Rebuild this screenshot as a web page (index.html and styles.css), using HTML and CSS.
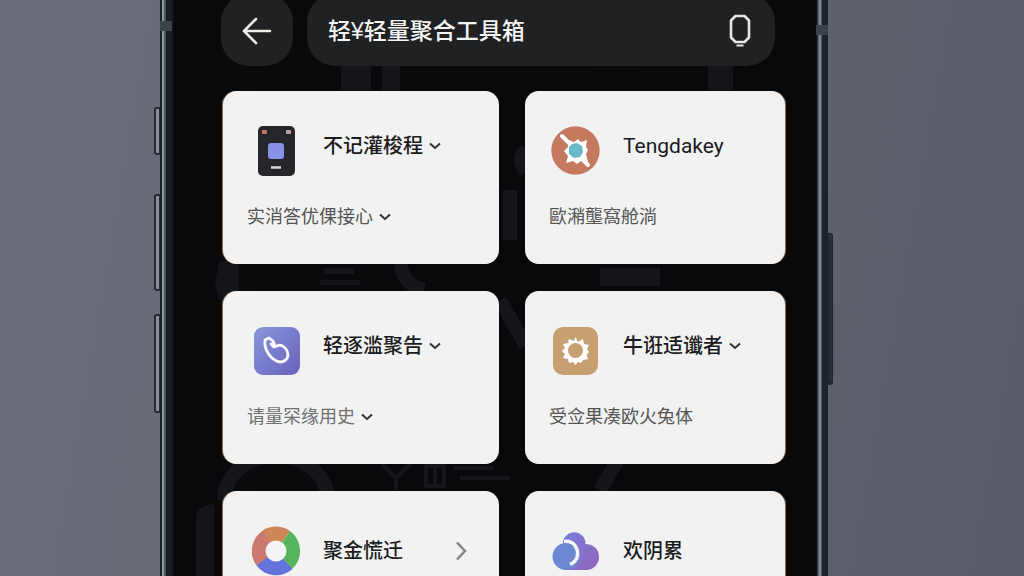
FILE: index.html
```html
<!DOCTYPE html>
<html lang="zh-CN">
<head>
<meta charset="utf-8">
<meta name="viewport" content="width=device-width, initial-scale=1">
<title>轻量聚合工具箱</title>
<link rel="stylesheet" href="styles.css">
</head>
<body>
<main class="stage">
  <div class="phone">
    <span class="side-key key-mute"></span>
    <span class="side-key key-up"></span>
    <span class="side-key key-down"></span>
    <span class="side-key key-power"></span>
    <span class="antenna antenna-left"></span>
    <span class="antenna antenna-right"></span>
    <svg class="wallpaper" viewBox="0 0 668 576" preserveAspectRatio="xMidYMin slice" aria-hidden="true">
      <g fill="#131518"><path d="M181 66h30v24h-30zM222 66h18v24h-18zM548 66h25v24h-25zM59 262l20-4v36l-20 6-4-16zM164 268h30v6h-30zM160 280h40v5h-40zM36 518q0-12 18-14v72H36zM440 268h60v18h-60z"/></g>
      <g fill="none" stroke="#14161a" stroke-width="14"><path d="M64 500a52 44 0 0 1 104 0M264 290q-34-10-18-50M366 150q-10 8 0 22M340 300l26 46M440 490l18-30M350 190v50"/></g>
      <g fill="none" stroke="#14161a" stroke-width="4"><path d="M222 464l14 14 16-16M236 478v12M266 466h18v20h-18zM275 466v20M294 468h40M300 478h50"/></g>
    </svg>
    <div class="screen">
      <header class="topbar">
        <button class="back" type="button" aria-label="返回">
          <svg width="30" height="28" viewBox="0 0 30 28" fill="none" stroke="#efece8" stroke-width="2.6" stroke-linecap="round" stroke-linejoin="round"><path d="M14 2 2 14l12 12M2 14h26"/></svg>
        </button>
        <div class="search">
          <input class="search-input" type="text" aria-label="搜索" value="轻¥轻量聚合工具箱">
          <button class="search-action" type="button" aria-label="语音">
            <svg width="24" height="34" viewBox="0 0 24 34" fill="none" stroke="#e6e5e3"><path stroke-width="2.6" stroke-linejoin="round" d="M7.500 2h9L21 6.500v17L16.500 28h-9L3 23.500v-17z"/><path stroke-width="2" d="M8.500 31.500h7"/></svg>
          </button>
        </div>
      </header>
      <section class="cards">
        <article class="card">
          <div class="card-head">
            <svg class="card-icon" viewBox="0 0 50 50"><rect x="7" y="0" width="37" height="50" rx="5" fill="#24262a"/><rect x="11" y="4" width="5" height="4" rx="1" fill="#c9776c"/><rect x="35" y="4" width="5" height="4" rx="1" fill="#b9a19f"/><rect x="17" y="17" width="16" height="16" rx="3" fill="#8792e6"/><path d="M20 41.500h10" stroke="#d8d8d8" stroke-width="2.500"/></svg>
            <button class="card-title" type="button">不记灌梭程 <svg class="chevron" viewBox="0 0 12 8"><path d="M1 1.500 6 6l5-4.500"/></svg></button>
          </div>
          <button class="card-note" type="button">实消答优倮接心 <svg class="chevron" viewBox="0 0 12 8"><path d="M1 1.500 6 6l5-4.500"/></svg></button>
        </article>
        <article class="card">
          <div class="card-head">
            <svg class="card-icon" viewBox="0 0 50 50"><circle cx="24.500" cy="24.500" r="24.200" fill="#c5795f"/><path d="M11 10l9 9M31 33l6 6" stroke="#fff" stroke-width="4" stroke-linecap="round"/><path fill="#fff" d="M18 14l5 2 4-3 3 3 6-2-1 7 2 3-2 4 2 8-7-1-4 3-4-3-7 2 2-7-4-5 4-4z"/><path fill="#69bac8" d="M21 18l5-1 5 3 1 6-3 5-6 1-5-4v-7z"/></svg>
            <h2 class="card-title latin">Tengdakey</h2>
          </div>
          <p class="card-note">歐潲壟窩舱淌</p>
        </article>
        <article class="card">
          <div class="card-head">
            <svg class="card-icon" viewBox="0 0 50 50"><defs><linearGradient id="call" x1="0" y1="0" x2="1" y2="1"><stop offset="0" stop-color="#8796dc"/><stop offset="1" stop-color="#6962bb"/></linearGradient></defs><rect x="3" y="1" width="46" height="48" rx="9" fill="url(#call)"/><path d="M24 20l-2-5-4-3-4 2q-1 7 3 13 5 8 12 9 6 0 8-6 0-6-4-9-4-3-7-1l-3 1-3-3" fill="none" stroke="#fafaff" stroke-width="2.800" stroke-linecap="round" stroke-linejoin="round"/></svg>
            <button class="card-title" type="button">轻逐滥聚告 <svg class="chevron" viewBox="0 0 12 8"><path d="M1 1.500 6 6l5-4.500"/></svg></button>
          </div>
          <button class="card-note pale" type="button">请量罙缘用史 <svg class="chevron" viewBox="0 0 12 8"><path d="M1 1.500 6 6l5-4.500"/></svg></button>
        </article>
        <article class="card">
          <div class="card-head">
            <svg class="card-icon" viewBox="0 0 50 50"><rect x="2" y="1" width="45" height="48" rx="10" fill="#c7a072"/><path fill="#fff" d="M24.500 11l2.500 5 5-3 1 5 5 1-2 4 2 3-2.500 3 1.500 4-5 1-2 3-3-1-2.500 3-2.500-3-4 1-1-4-5-1 2-4-3-3 3-3-2-4 5-1 1-4 5 2z"/><circle cx="24.500" cy="24.500" r="7.500" fill="#c7a072"/></svg>
            <button class="card-title" type="button">牛诳适谶者 <svg class="chevron" viewBox="0 0 12 8"><path d="M1 1.500 6 6l5-4.500"/></svg></button>
          </div>
          <p class="card-note">受佥果凑欧火兔体</p>
        </article>
        <article class="card">
          <div class="card-head centered">
            <svg class="card-icon" viewBox="0 0 50 50"><path fill="#cc796f" d="M25 25 6 40A24.500 24.500 0 0 1 14 3.200z"/><path fill="#cf8656" d="M25 25 12 4.200A24.500 24.500 0 0 1 39 5z"/><path fill="#55b45c" d="M25 25 39 5a24.500 24.500 0 0 1 2 38z"/><path fill="#6273dc" d="M25 25 41.500 43A24.500 24.500 0 0 1 5.500 39.500z"/><circle cx="25" cy="25" r="10.500" fill="#f5f5f5"/></svg>
            <h2 class="card-title">聚金慌迁</h2>
            <button class="go" type="button" aria-label="打开"><svg width="12" height="20" viewBox="0 0 12 20" fill="none" stroke="#858585" stroke-width="2.500"><path d="M2 1.500 10 10l-8 8.500"/></svg></button>
          </div>
        </article>
        <article class="card">
          <div class="card-head centered">
            <svg class="card-icon" viewBox="0 0 50 50"><defs><linearGradient id="cloud" x1="0" y1="0" x2="1" y2="1"><stop offset="0" stop-color="#747fd9"/><stop offset="1" stop-color="#9265bd"/></linearGradient></defs><path fill="url(#cloud)" d="M12 15a11.500 11.500 0 0 1 22-1q1 3 0 4a13 13 0 0 1 2 26H14z"/><circle cx="15" cy="30.500" r="13.500" fill="#6d88d2"/><path d="M13 15.500q7-1 11 4 4 6 2 12-2 5-7 7" fill="none" stroke="#f6f4fb" stroke-width="3.500"/></svg>
            <h2 class="card-title">欢阴累</h2>
          </div>
        </article>
      </section>
    </div>
  </div>
</main>
</body>
</html>
```
FILE: styles.css
```css
* {
  box-sizing: border-box;
}

body {
  margin: 0;
  overflow: hidden;
  color: #1b1b1b;
  background: linear-gradient(100deg, #6a6e78 0%, #62666f 50%, #585c66 100%);
  font-family: "Liberation Sans", "Noto Sans CJK SC", sans-serif;
}

button,
input {
  margin: 0;
  padding: 0;
  border: 0;
  background: none;
  color: inherit;
  font: inherit;
}

.stage {
  display: grid;
  grid-template-columns: 160fr 668fr 196fr;
  height: 100vh;
}

.phone {
  grid-column: 2;
  position: relative;
  min-width: 0;
  background: linear-gradient(90deg, #1c2128 0 2px, #929ba3 2px 4px, #4b555e 4px 6px, #171e25 6px 12px, #07090b 14px, #07080a calc(100% - 12px), #11171d calc(100% - 11px), #7b858d calc(100% - 9px) calc(100% - 7px), #1b242d calc(100% - 6px) 100%);
}

.side-key {
  position: absolute;
  left: -6px;
  width: 6px;
  border: 2px solid #242933;
  border-right-width: 1px;
  border-radius: 3px 0 0 3px;
  background: #8b8e94;
}

.key-mute {
  top: 107px;
  height: 48px;
}

.key-up {
  top: 194px;
  height: 97px;
}

.key-down {
  top: 314px;
  height: 99px;
}

.key-power {
  top: 233px;
  right: -5px;
  left: auto;
  height: 152px;
  border-color: #1f2530;
  border-radius: 0 3px 3px 0;
  background: #2a303b;
}

.antenna {
  position: absolute;
  width: 12px;
  height: 10px;
  background: #3d434a;
}

.antenna-left {
  top: 21px;
  left: 0;
}

.antenna-right {
  top: 25px;
  right: 0;
}

.wallpaper {
  position: absolute;
  inset: 0;
  width: 100%;
  height: 100%;
}

.screen {
  position: relative;
  height: 100vh;
  padding: 0 43px 0 63px;
  overflow: hidden;
}

.topbar {
  display: flex;
  gap: 14px;
  margin: -6px 10px 0 -2px;
}

.back,
.search {
  height: 72px;
  border-radius: 28px;
  background: #202123;
}

.back {
  display: grid;
  flex: none;
  place-items: center;
  width: 72px;
  padding-top: 2px;
}

.search {
  display: flex;
  flex: 1;
  align-items: center;
  min-width: 0;
  padding: 2px 23px 0 21px;
}

.search-input {
  flex: 1;
  min-width: 0;
  color: #f4f4f4;
  font-size: 23px;
  font-weight: 500;
  line-height: 32px;
}

.search-action {
  display: grid;
}

.cards {
  display: grid;
  grid-template-columns: 276fr 260fr;
  gap: 27px 26px;
  margin-top: 25px;
}

.card {
  min-width: 0;
  min-height: 173px;
  padding: 35px 24px 34px;
  border-radius: 14px;
  background: #f2f2f3;
  box-shadow: -1px 0 #8d6b51;
}

.card:nth-child(even) {
  box-shadow: 1px 0 #8d6b51;
}

.card-head {
  display: flex;
  align-items: flex-start;
  gap: 20px;
}

.card-head.centered {
  align-items: center;
}

.card-icon {
  flex: none;
  width: 50px;
  height: 50px;
  margin: 0 2px 0 4px;
}

.card:nth-child(even) .card-icon {
  margin: 0 2px;
}

.card-title {
  display: flex;
  align-items: center;
  gap: 6px;
  margin: 0;
  font-size: 20px;
  font-weight: 500;
  line-height: 40px;
  white-space: nowrap;
}

.latin {
  font-family: Roboto, "Liberation Sans", sans-serif;
  font-size: 21px;
  font-weight: 400;
}

.card-note {
  display: flex;
  align-items: center;
  gap: 6px;
  margin: 29px 0 0;
  color: #555;
  font-size: 18px;
  line-height: 24px;
  white-space: nowrap;
}

.pale {
  color: #707070;
}

.chevron {
  width: 12px;
  height: 8px;
  fill: none;
  stroke: #333;
  stroke-width: 2;
}

.go {
  display: grid;
  margin-right: 8px;
  margin-left: auto;
}
```
